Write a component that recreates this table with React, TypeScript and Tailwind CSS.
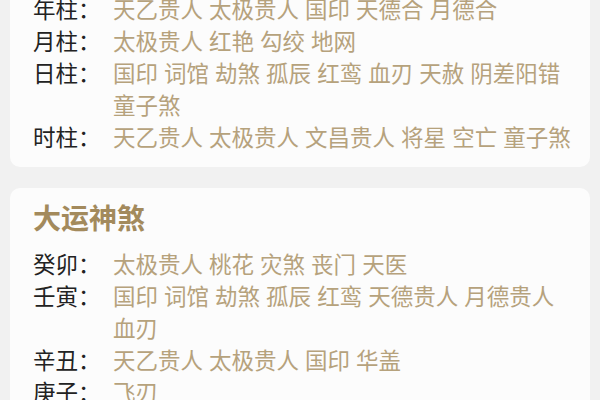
const pillars: [string, string[]][] = [
  ["年柱：", ["天乙贵人", "太极贵人", "国印", "天德合", "月德合"]],
  ["月柱：", ["太极贵人", "红艳", "勾绞", "地网"]],
  ["日柱：", ["国印", "词馆", "劫煞", "孤辰", "红鸾", "血刃", "天赦", "阴差阳错", "童子煞"]],
  ["时柱：", ["天乙贵人", "太极贵人", "文昌贵人", "将星", "空亡", "童子煞"]],
];

const dayun: [string, string[]][] = [
  ["癸卯：", ["太极贵人", "桃花", "灾煞", "丧门", "天医"]],
  ["壬寅：", ["国印", "词馆", "劫煞", "孤辰", "红鸾", "天德贵人", "月德贵人", "血刃"]],
  ["辛丑：", ["天乙贵人", "太极贵人", "国印", "华盖"]],
  ["庚子：", ["飞刃"]],
];

function Row({ label, items }: { label: string; items: string[] }) {
  return (
    <div className="flex text-[22.5px] leading-[32px]">
      <div className="w-[80px] shrink-0 text-[#222222]">{label}</div>
      <div className="flex-1 break-keep text-[#b6a27c] [word-spacing:1px]">{items.join(" ")}</div>
    </div>
  );
}

export default function App() {
  return (
    <div
      className="h-[400px] overflow-hidden bg-[#f1f1f1] px-[10px]"
      style={{ fontFamily: '"Noto Sans CJK SC", "Noto Sans", sans-serif' }}
    >
      <div className="-mt-[22px] rounded-[10px] bg-[#fcfcfc] pb-[15px] pl-[23px] pr-[18px] pt-[14px]">
        {pillars.map(([l, items]) => (
          <Row key={l} label={l} items={items} />
        ))}
      </div>
      <div className="mt-[21px] rounded-[10px] bg-[#fcfcfc] pb-[13px] pl-[23px] pr-[18px] pt-[11px]">
        <h2 className="mb-[12px] text-[28px] font-bold leading-[36px] text-[#a38a5c]">大运神煞</h2>
        {dayun.map(([l, items]) => (
          <Row key={l} label={l} items={items} />
        ))}
      </div>
    </div>
  );
}
